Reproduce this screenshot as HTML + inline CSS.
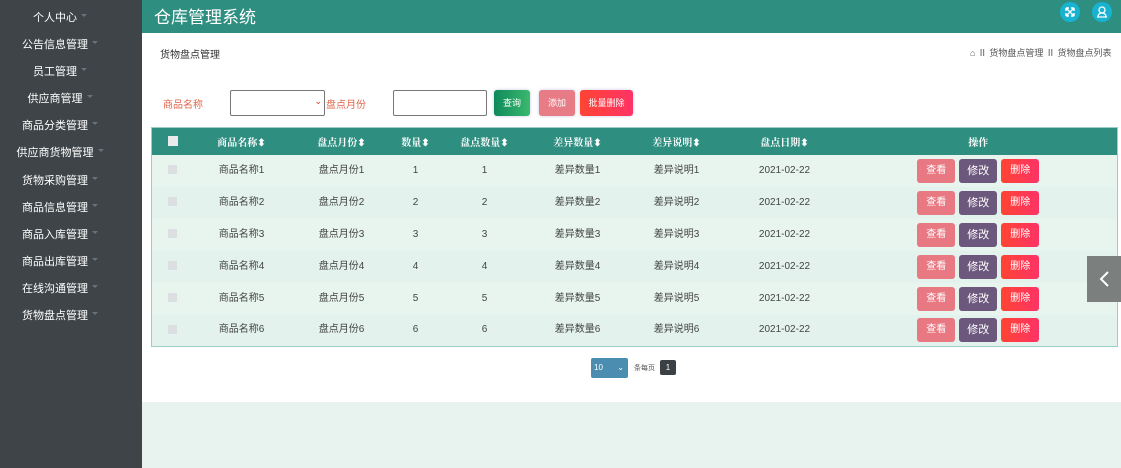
<!DOCTYPE html>
<html><head><meta charset="utf-8"><style>
*{margin:0;padding:0;box-sizing:border-box}
body{width:1121px;height:468px;overflow:hidden;position:relative;font-family:"Liberation Sans","Noto Sans CJK SC",sans-serif;font-size:11px;color:#444;background:#fff}
.side{position:absolute;left:0;top:0;width:142px;height:468px;background:#3e4448}
.side div{position:absolute;left:0;width:120px;text-align:center;color:#fff;font-size:11px}
.side div:after{content:"";display:inline-block;margin-left:4px;border:3px solid transparent;border-top:3px solid #6b7176;vertical-align:1px}
.top{position:absolute;left:142px;top:0;width:979px;height:33px;background:#2e8e80}
.top h1{position:absolute;left:12px;top:3px;font-size:17px;font-weight:normal;color:#fff}
.ic{position:absolute;top:2px;width:20px;height:20px;border-radius:50%;background:#18b3d0}
.bottom{position:absolute;left:142px;top:402px;width:979px;height:66px;background:#e8f2ee}
.abs{position:absolute}
.lbl{color:#e0664a;font-size:10px}
.box{position:absolute;border:1px solid #777;border-radius:2px;background:#fff}
.btn{position:absolute;color:#fff;font-size:9px;text-align:center;border-radius:3px;box-shadow:0 0 3px rgba(120,120,200,.4)}
table{position:absolute;left:151px;top:127px;width:967px;border-collapse:collapse;border:1px solid #9ccdc6}
th{background:#2e8e80;color:#fff;font-family:"Liberation Serif","Noto Serif CJK SC",serif;font-size:10px;height:27px;font-weight:bold}
td{height:32px;text-align:center;font-size:10px;color:#444;background:#e3f2ec;vertical-align:middle;line-height:14px}
tr:nth-child(even) td{background:#e8f5ee}
.cb{display:inline-block;width:9px;height:9px;background:#dcdfe2;vertical-align:middle}
th .cb{width:10px;height:10px;background:#e8eaec}
.b{display:inline-block;width:38px;height:24px;line-height:24px;color:#fff;border-radius:3px;margin:0 2px;font-size:10px;vertical-align:middle}
.v{background:#e87882}.e{background:#6b587c;font-size:11px}.d{background:linear-gradient(90deg,#ff4433,#ff3366)}
</style></head><body>
<div class="side">
<div style="top:9px">个人中心</div><div style="top:36px">公告信息管理</div><div style="top:63px">员工管理</div><div style="top:90px">供应商管理</div><div style="top:117px">商品分类管理</div><div style="top:144px">供应商货物管理</div><div style="top:172px">货物采购管理</div><div style="top:199px">商品信息管理</div><div style="top:226px">商品入库管理</div><div style="top:253px">商品出库管理</div><div style="top:280px">在线沟通管理</div><div style="top:307px">货物盘点管理</div>
</div>
<div class="top"><h1>仓库管理系统</h1>
<div class="ic" style="left:918px"><svg width="20" height="20" viewBox="0 0 20 20" stroke="#fff" stroke-width="1.4" fill="none"><path d="M6 6l8 8M14 6l-8 8M6 6h3M6 6v3M14 14h-3M14 14v-3M14 6h-3M14 6v3M6 14h3M6 14v-3"/></svg></div>
<div class="ic" style="left:950px"><svg width="20" height="20" viewBox="0 0 20 20" stroke="#fff" stroke-width="1.3" fill="none"><circle cx="10" cy="8" r="3"/><path d="M5 15h10M6 15c0-3 2-4 4-4s4 1 4 4"/></svg></div></div>
<div class="abs" style="left:160px;top:46px;font-size:10px;color:#333">货物盘点管理</div>
<div class="abs" style="left:970px;top:46px;font-size:9px;color:#555">⌂ Ⅱ 货物盘点管理 Ⅱ 货物盘点列表</div>
<div class="abs lbl" style="left:163px;top:96px">商品名称</div>
<div class="box" style="left:230px;top:90px;width:95px;height:26px"><span style="position:absolute;right:2px;top:5px;color:#d33;font-size:9px">⌄</span></div>
<div class="abs lbl" style="left:326px;top:96px">盘点月份</div>
<div class="box" style="left:393px;top:90px;width:94px;height:26px"></div>
<div class="btn" style="left:494px;top:90px;width:36px;height:26px;line-height:26px;background:linear-gradient(90deg,#0e8a5a,#3cb86f)">查询</div>
<div class="btn" style="left:539px;top:90px;width:36px;height:26px;line-height:26px;background:#e87c86">添加</div>
<div class="btn" style="left:580px;top:90px;width:53px;height:26px;line-height:26px;background:linear-gradient(90deg,#ff4433,#ff3366)">批量删除</div>
<table>
<tr><th style="width:42px"><span class="cb"></span></th><th style="width:96px">商品名称⬍</th><th style="width:104px">盘点月份⬍</th><th style="width:44px">数量⬍</th><th style="width:94px">盘点数量⬍</th><th style="width:92px">差异数量⬍</th><th style="width:106px">差异说明⬍</th><th style="width:110px">盘点日期⬍</th><th>操作</th></tr>
<tr><td><span class="cb"></span></td><td>商品名称1</td><td>盘点月份1</td><td>1</td><td>1</td><td>差异数量1</td><td>差异说明1</td><td>2021-02-22</td><td><span class="b v">查看</span><span class="b e">修改</span><span class="b d">删除</span></td></tr>
<tr><td><span class="cb"></span></td><td>商品名称2</td><td>盘点月份2</td><td>2</td><td>2</td><td>差异数量2</td><td>差异说明2</td><td>2021-02-22</td><td><span class="b v">查看</span><span class="b e">修改</span><span class="b d">删除</span></td></tr>
<tr><td><span class="cb"></span></td><td>商品名称3</td><td>盘点月份3</td><td>3</td><td>3</td><td>差异数量3</td><td>差异说明3</td><td>2021-02-22</td><td><span class="b v">查看</span><span class="b e">修改</span><span class="b d">删除</span></td></tr>
<tr><td><span class="cb"></span></td><td>商品名称4</td><td>盘点月份4</td><td>4</td><td>4</td><td>差异数量4</td><td>差异说明4</td><td>2021-02-22</td><td><span class="b v">查看</span><span class="b e">修改</span><span class="b d">删除</span></td></tr>
<tr><td><span class="cb"></span></td><td>商品名称5</td><td>盘点月份5</td><td>5</td><td>5</td><td>差异数量5</td><td>差异说明5</td><td>2021-02-22</td><td><span class="b v">查看</span><span class="b e">修改</span><span class="b d">删除</span></td></tr>
<tr><td><span class="cb"></span></td><td>商品名称6</td><td>盘点月份6</td><td>6</td><td>6</td><td>差异数量6</td><td>差异说明6</td><td>2021-02-22</td><td><span class="b v">查看</span><span class="b e">修改</span><span class="b d">删除</span></td></tr>
</table>
<div class="abs" style="left:591px;top:358px;width:37px;height:20px;background:#4a8db0;border-radius:2px;color:#fff;font-size:8px;line-height:20px;padding-left:3px">10<span style="position:absolute;right:4px">⌄</span></div>
<div class="abs" style="left:634px;top:363px;font-size:7px;color:#555">条每页</div>
<div class="abs" style="left:660px;top:360px;width:16px;height:15px;background:#3a4044;color:#fff;font-size:8px;text-align:center;line-height:15px;border-radius:2px">1</div>
<div class="bottom"></div>
<div class="abs" style="left:1087px;top:256px;width:34px;height:46px;background:#7b807e"><svg width="34" height="46" viewBox="0 0 34 46" stroke="#fff" stroke-width="2" fill="none"><path d="M21 16l-7 7 7 7"/></svg></div>
</body></html>
